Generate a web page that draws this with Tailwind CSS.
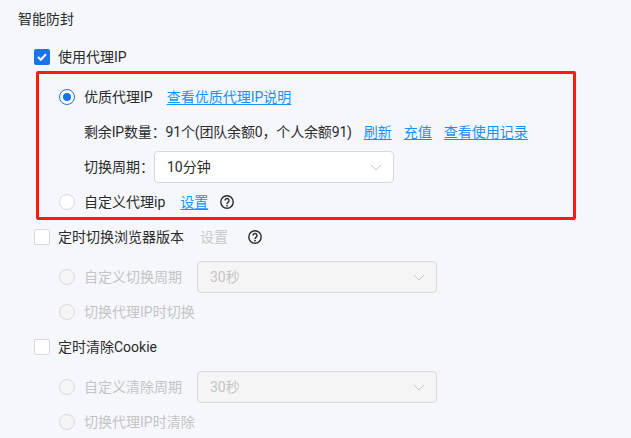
<!DOCTYPE html>
<html lang="zh-CN">
<head>
  <meta charset="UTF-8" />
  <title>智能防封</title>
  <script src="https://cdn.jsdelivr.net/npm/@tailwindcss/browser@4"></script>
</head>
<body class="bg-[#f5f7fc] w-[631px] h-[438px] overflow-hidden text-[14px] text-[#2b2b2b] font-['Roboto','Noto_Sans_CJK_SC',sans-serif]">

  <div class="pl-[18px] pt-[9px]">
    <div class="h-[20px] leading-[20px]">智能防封</div>

    <div class="pl-[16px] mt-[18px]">
      <!-- 使用代理IP -->
      <label class="flex items-center h-[20px]">
        <span class="w-[16px] h-[16px] rounded-[2px] bg-[#1a73e8] flex items-center justify-center mr-[8px]">
          <svg width="10" height="8" viewBox="0 0 10 8" fill="none"><path d="M1 4l2.8 2.8L9 1.2" stroke="#fff" stroke-width="2"/></svg>
        </span>
        <span>使用代理IP</span>
      </label>

      <!-- 红框 -->
      <div class="w-[540px] h-[149px] ml-[2px] mt-[4px] border-[3px] border-[#ff1a12] rounded-[2px] pl-[20px] pt-[5px]">
        <div class="flex items-center h-[36px]">
          <span class="w-[16px] h-[16px] rounded-full border border-[#1a73e8] bg-white flex items-center justify-center mr-[9px]">
            <span class="w-[8px] h-[8px] rounded-full bg-[#1a73e8]"></span>
          </span>
          <span>优质代理IP</span>
          <a class="ml-[14px] text-[#1890ff] underline underline-offset-2">查看优质代理IP说明</a>
        </div>
        <div class="flex items-center h-[34px] pl-[25px]">
          <span class="tracking-[-0.16px]">剩余IP数量：91个(团队余额0，个人余额91)</span>
          <a class="ml-[12px] text-[#1890ff] underline underline-offset-2">刷新</a>
          <a class="ml-[12px] text-[#1890ff] underline underline-offset-2">充值</a>
          <a class="ml-[12px] text-[#1890ff] underline underline-offset-2">查看使用记录</a>
        </div>
        <div class="flex items-center h-[36px] pl-[25px]">
          <span class="w-[70px]">切换周期：</span>
          <div class="w-[240px] h-[32px] bg-white border border-[#d9d9d9] rounded-[4px] flex items-center justify-between pl-[12px] pr-[11px]">
            <span>10分钟</span>
            <svg width="12" height="7" viewBox="0 0 12 7" fill="none"><path d="M1 1l5 5 5-5" stroke="#c4c4c4" stroke-width="1"/></svg>
          </div>
        </div>
        <div class="flex items-center h-[34px]">
          <span class="w-[16px] h-[16px] rounded-full border border-[#d9d9d9] bg-white mr-[9px]"></span>
          <span>自定义代理ip</span>
          <a class="ml-[15px] text-[#1890ff] underline underline-offset-2">设置</a>
          <svg class="ml-[12px]" width="14" height="14" viewBox="0 0 14 14" fill="none">
            <circle cx="7" cy="7" r="6.2" stroke="#2b2b2b" stroke-width="1.4"/>
            <path d="M5 5.5a2 2 0 1 1 3.2 1.6C7.4 7.7 7 8 7 8.9" stroke="#2b2b2b" stroke-width="1.4"/>
            <circle cx="7" cy="10.6" r="0.9" fill="#2b2b2b"/>
          </svg>
        </div>
      </div>

      <!-- 定时切换浏览器版本 -->
      <div class="flex items-center h-[34px]">
        <span class="w-[16px] h-[16px] rounded-[2px] border border-[#d9d9d9] bg-white mr-[8px]"></span>
        <span>定时切换浏览器版本</span>
        <span class="ml-[16px] text-[#c8c8c8]">设置</span>
        <svg class="ml-[20px]" width="14" height="14" viewBox="0 0 14 14" fill="none">
          <circle cx="7" cy="7" r="6.2" stroke="#2b2b2b" stroke-width="1.4"/>
          <path d="M5 5.5a2 2 0 1 1 3.2 1.6C7.4 7.7 7 8 7 8.9" stroke="#2b2b2b" stroke-width="1.4"/>
          <circle cx="7" cy="10.6" r="0.9" fill="#2b2b2b"/>
        </svg>
      </div>
      <div class="pl-[25px] text-[#c4c4c4]">
        <div class="flex items-center h-[46px]">
          <span class="w-[16px] h-[16px] rounded-full border border-[#d9d9d9] bg-[#f5f5f5] mr-[9px]"></span>
          <span class="w-[113px]">自定义切换周期</span>
          <div class="w-[240px] h-[32px] bg-[#f5f5f5] border border-[#d9d9d9] rounded-[4px] flex items-center justify-between pl-[12px] pr-[11px]">
            <span>30秒</span>
            <svg width="12" height="7" viewBox="0 0 12 7" fill="none"><path d="M1 1l5 5 5-5" stroke="#c4c4c4" stroke-width="1"/></svg>
          </div>
        </div>
        <div class="flex items-center h-[24px]">
          <span class="w-[16px] h-[16px] rounded-full border border-[#d9d9d9] bg-[#f5f5f5] mr-[9px]"></span>
          <span>切换代理IP时切换</span>
        </div>
      </div>

      <!-- 定时清除Cookie -->
      <div class="flex items-center h-[46px]">
        <span class="w-[16px] h-[16px] rounded-[2px] border border-[#d9d9d9] bg-white mr-[8px]"></span>
        <span>定时清除Cookie</span>
      </div>
      <div class="pl-[25px] text-[#c4c4c4]">
        <div class="flex items-center h-[34px]">
          <span class="w-[16px] h-[16px] rounded-full border border-[#d9d9d9] bg-[#f5f5f5] mr-[9px]"></span>
          <span class="w-[113px]">自定义清除周期</span>
          <div class="w-[240px] h-[32px] bg-[#f5f5f5] border border-[#d9d9d9] rounded-[4px] flex items-center justify-between pl-[12px] pr-[11px]">
            <span>30秒</span>
            <svg width="12" height="7" viewBox="0 0 12 7" fill="none"><path d="M1 1l5 5 5-5" stroke="#c4c4c4" stroke-width="1"/></svg>
          </div>
        </div>
        <div class="flex items-center h-[36px]">
          <span class="w-[16px] h-[16px] rounded-full border border-[#d9d9d9] bg-[#f5f5f5] mr-[9px]"></span>
          <span>切换代理IP时清除</span>
        </div>
      </div>
    </div>
  </div>

</body>
</html>
